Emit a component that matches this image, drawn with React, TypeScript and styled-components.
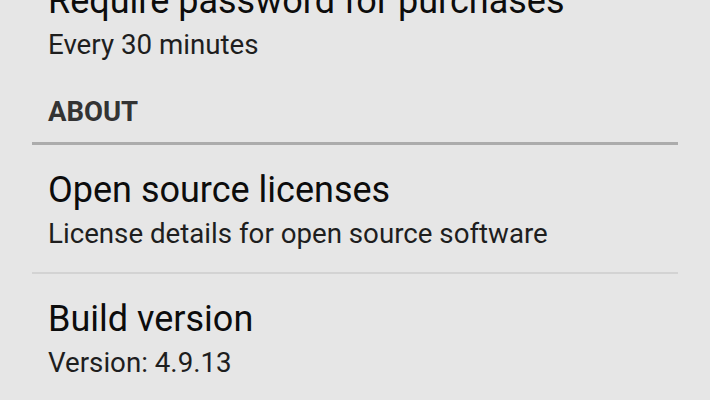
import React from "react";
import styled, { createGlobalStyle } from "styled-components";

const Global = createGlobalStyle`
  html, body {
    margin: 0;
    padding: 0;
    background: #e6e6e6;
    overflow: hidden;
  }
  body {
    font-family: Roboto, "Noto Sans", sans-serif;
  }
`;

const Screen = styled.div`
  width: 710px;
  height: 400px;
  overflow: hidden;
  background: #e6e6e6;
`;

const List = styled.div`
  display: flex;
  flex-direction: column;
  margin: -20px 32px 0;
`;

const Item = styled.div<{ $divider?: boolean }>`
  padding: 0 16px 16px;
  padding-top: ${(p) => (p.$divider !== undefined ? "24px" : "0")};
  border-bottom: ${(p) => (p.$divider ? "2px solid #d3d3d3" : "none")};
`;

const Title = styled.div`
  font-size: 36px;
  line-height: 43px;
  color: #0c0c0c;
  white-space: nowrap;
`;

const Summary = styled.div`
  font-size: 27.7px;
  line-height: 44px;
  color: #1e1e1e;
  white-space: nowrap;
`;

const Header = styled.div`
  padding: 13px 16px 14px;
  font-size: 27.5px;
  line-height: 32px;
  font-weight: 700;
  color: #333333;
  border-bottom: 3px solid #acacac;
`;

export default function App() {
  return (
    <Screen>
      <Global />
      <List>
        <Item>
          <Title>Require password for purchases</Title>
          <Summary>Every 30 minutes</Summary>
        </Item>
        <Header>ABOUT</Header>
        <Item $divider>
          <Title>Open source licenses</Title>
          <Summary>License details for open source software</Summary>
        </Item>
        <Item $divider={false}>
          <Title>Build version</Title>
          <Summary>Version: 4.9.13</Summary>
        </Item>
      </List>
    </Screen>
  );
}
